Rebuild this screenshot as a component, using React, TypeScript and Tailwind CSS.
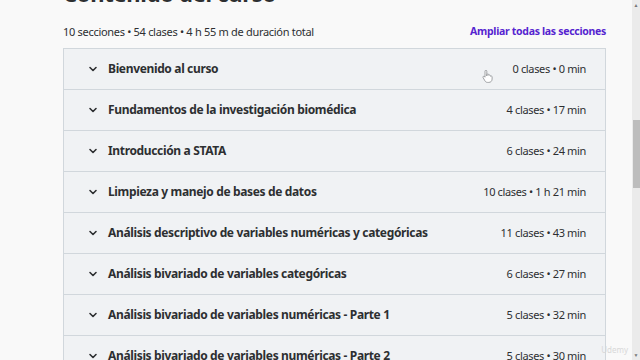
import React from "react";

const sections = [
  { title: "Bienvenido al curso", meta: "0 clases • 0 min" },
  { title: "Fundamentos de la investigación biomédica", meta: "4 clases • 17 min" },
  { title: "Introducción a STATA", meta: "6 clases • 24 min" },
  { title: "Limpieza y manejo de bases de datos", meta: "10 clases • 1 h 21 min" },
  { title: "Análisis descriptivo de variables numéricas y categóricas", meta: "11 clases • 43 min" },
  { title: "Análisis bivariado de variables categóricas", meta: "6 clases • 27 min" },
  { title: "Análisis bivariado de variables numéricas - Parte 1", meta: "5 clases • 32 min" },
  { title: "Análisis bivariado de variables numéricas - Parte 2", meta: "5 clases • 30 min" },
];

const Chevron = () => (
  <svg width="10" height="10" viewBox="0 0 10 10" className="shrink-0">
    <path d="M2 3.5 L5 6.5 L8 3.5" fill="none" stroke="#2d2f31" strokeWidth="1.6" strokeLinecap="round" strokeLinejoin="round" />
  </svg>
);

export default function App() {
  return (
    <div
      className="w-[640px] h-[360px] overflow-hidden bg-[#f9f9f9] flex text-[#2d2f31]"
      style={{ fontFamily: '"Noto Sans", "Open Sans", sans-serif' }}
    >
      <div className="flex-1 pl-[63px] pr-[26px] relative">
        <h2 className="-mt-[23px] h-[32px] text-[22px] leading-[32px] font-bold tracking-[-0.3px]">Contenido del curso</h2>
        <div className="mt-[13px] h-[20px] flex items-center justify-between">
          <span className="text-[11px] tracking-[-0.3px]">10 secciones • 54 clases • 4 h 55 m de duración total</span>
          <span className="font-bold text-[#5624d0] text-[10.5px] tracking-[-0.3px]">Ampliar todas las secciones</span>
        </div>
        <div className="mt-[6px] border border-[#d1d7dc] bg-[#f0f2f4]">
          {sections.map((s) => (
            <div key={s.title} className="h-[41px] border-b border-[#d1d7dc] flex items-center pl-[24px] pr-[19px]">
              <Chevron />
              <span className="ml-[10px] font-bold text-[12px] tracking-[-0.35px]">{s.title}</span>
              <span className="ml-auto text-[11px] tracking-[-0.35px]">{s.meta}</span>
            </div>
          ))}
        </div>
        <svg className="absolute left-[482px] top-[70px]" width="11" height="13" viewBox="0 0 11 13">
          <path
            d="M3 1.2 a0.9 0.9 0 0 1 1.8 0 V6 l0.2-1.6 a0.9 0.9 0 0 1 1.7 0.4 l0.1 0.6 a0.9 0.9 0 0 1 1.6 0.3 l0.1 0.6 a0.9 0.9 0 0 1 1.6 0.5 V9 c0 2-1.3 3.4-3.3 3.4 H5.5 c-1.2 0-2-0.6-2.6-1.6 L1.1 7.6 a0.9 0.9 0 0 1 1.5-1 L3 7.2 Z"
            fill="#ffffff"
            stroke="#8a8d90"
            strokeWidth="0.8"
          />
        </svg>
        <span className="absolute right-[4px] bottom-[4px] text-[8px] text-[#d8d8d8]">Udemy</span>
      </div>
      <div className="w-[8px] h-full bg-[#ebebeb] flex flex-col items-center">
        <span className="text-[5px] leading-[8px] text-[#777] mt-[1px]">▲</span>
        <div className="mt-[111px] h-[68px] w-[7px] bg-[#bdbdbd]" />
        <span className="mt-auto text-[5px] leading-[8px] text-[#777] mb-[1px]">▼</span>
      </div>
    </div>
  );
}
